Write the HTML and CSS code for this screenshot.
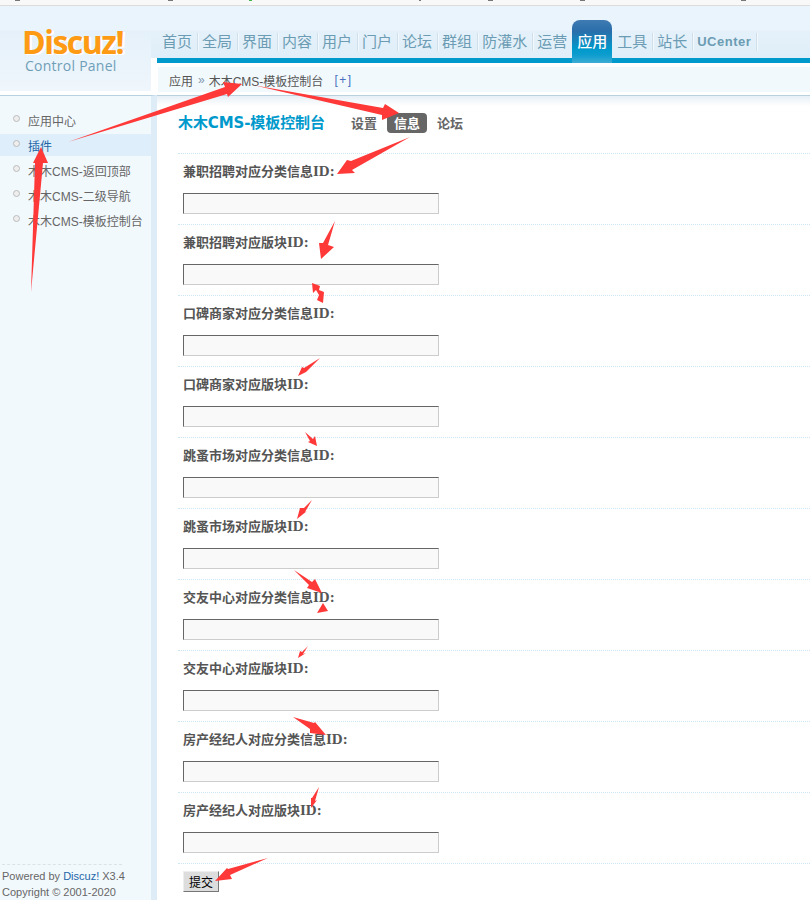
FILE: index.html
```html
<!DOCTYPE html>
<html lang="zh-CN">
<head>
<meta charset="utf-8">
<title>Discuz! Control Panel</title>
<link rel="stylesheet" href="styles.css">
</head>
<body>
<div class="page">
  <div class="topstrip"></div>
  <div class="shell">
    <aside class="leftcol">
      <div class="logo">
        <div class="logo-mark">Discuz!</div>
        <div class="logo-sub">Control Panel</div>
      </div>
      <div class="sidebar">
        <ul class="menu">
          <li class="menu-item"><i class="dot"></i>应用中心</li>
          <li class="menu-item active"><i class="dot"></i>插件</li>
          <li class="menu-item"><i class="dot"></i>木木CMS-返回顶部</li>
          <li class="menu-item"><i class="dot"></i>木木CMS-二级导航</li>
          <li class="menu-item"><i class="dot"></i>木木CMS-模板控制台</li>
        </ul>
        <div class="foot">
          <div>Powered by <span class="foot-link">Discuz!</span> X3.4</div>
          <div>Copyright © 2001-2020</div>
        </div>
      </div>
    </aside>
    <main class="rightcol">
      <nav class="nav">
        <span class="nav-item">首页</span>
        <span class="nav-item">全局</span>
        <span class="nav-item">界面</span>
        <span class="nav-item">内容</span>
        <span class="nav-item">用户</span>
        <span class="nav-item">门户</span>
        <span class="nav-item">论坛</span>
        <span class="nav-item">群组</span>
        <span class="nav-item">防灌水</span>
        <span class="nav-item">运营</span>
        <span class="nav-tab">应用</span>
        <span class="nav-item">工具</span>
        <span class="nav-item">站长</span>
        <span class="nav-item nav-latin">UCenter</span>
      </nav>
      <div class="bluebar"></div>
      <div class="crumbwrap">
        <div class="crumb">
          <span>应用</span><span class="crumb-sep">»</span><span>木木CMS-模板控制台</span><span class="crumb-plus">[+]</span>
        </div>
      </div>
      <div class="content">
        <div class="titlerow">
          <h1 class="title">木木CMS-模板控制台</h1>
          <span class="tab">设置</span>
          <span class="tab tab-on">信息</span>
          <span class="tab">论坛</span>
        </div>
        <form class="form">
          <div class="row"><label class="label">兼职招聘对应分类信息<b class="id">ID:</b></label><input class="field" type="text"></div>
          <div class="row"><label class="label">兼职招聘对应版块<b class="id">ID:</b></label><input class="field" type="text"></div>
          <div class="row"><label class="label">口碑商家对应分类信息<b class="id">ID:</b></label><input class="field" type="text"></div>
          <div class="row"><label class="label">口碑商家对应版块<b class="id">ID:</b></label><input class="field" type="text"></div>
          <div class="row"><label class="label">跳蚤市场对应分类信息<b class="id">ID:</b></label><input class="field" type="text"></div>
          <div class="row"><label class="label">跳蚤市场对应版块<b class="id">ID:</b></label><input class="field" type="text"></div>
          <div class="row"><label class="label">交友中心对应分类信息<b class="id">ID:</b></label><input class="field" type="text"></div>
          <div class="row"><label class="label">交友中心对应版块<b class="id">ID:</b></label><input class="field" type="text"></div>
          <div class="row"><label class="label">房产经纪人对应分类信息<b class="id">ID:</b></label><input class="field" type="text"></div>
          <div class="row"><label class="label">房产经纪人对应版块<b class="id">ID:</b></label><input class="field" type="text"></div>
          <div class="row row-submit"><button class="submit" type="button">提交</button></div>
        </form>
      </div>
    </main>
  </div>
  <svg class="marks" width="810" height="900" viewBox="0 0 810 900" aria-hidden="true">
    <g class="specks">
      <rect x="15" y="0" width="5" height="1"/><rect x="168" y="0" width="5" height="1"/>
      <rect x="419" y="0" width="2" height="1"/><rect x="488" y="0" width="5" height="1"/>
      <rect x="580" y="0" width="5" height="1"/><rect x="741" y="0" width="5" height="1"/>
      <rect class="speck-green" x="249" y="0" width="3" height="1"/>
    </g>
    <g class="arrows">
      <polygon points="68,142 225,87 223,82 242,84 228,97 227,94"/>
      <polygon points="253,85 383,108 385,104 399,113 382,120 382,115"/>
      <polygon points="410,137 351,161 347,160 337,174 355,173 352,170"/>
      <polygon points="31,292 35,163 33,163 41,147 48,163 43,163"/>
      <polygon points="335,221 323,243 319,243 321,259 334,247 328,245"/>
      <polygon points="312,283 320,286 319,290 324,292 323,303 317,300 319,295 316,290 313,293"/>
      <polygon points="320,358 304,368 302,367 298,376 310,370 306,372"/>
      <polygon points="305,432 313,439 315,436 317,446 308,442 310,441"/>
      <polygon points="312,500 304,508 300,508 297,519 307,511 305,512"/>
      <polygon points="294,570 312,582 315,579 322,593 307,588 309,585"/>
      <polygon points="323,603 328,611 317,613"/>
      <polygon points="308,646 302,652 300,651 298,658 306,653 303,654"/>
      <polygon points="293,717 314,723 315,722 326,735 310,733 310,729"/>
      <polygon points="319,787 312,798 311,798 311,808 317,800 315,801"/>
      <polygon points="268,858 228,869 227,868 215,881 232,879 230,875"/>
    </g>
  </svg>
</div>
</body>
</html>
```
FILE: styles.css
```css
* { box-sizing: border-box; }
html, body { margin: 0; padding: 0; background: #fff; }
body { font: 12px "Liberation Sans", "Noto Sans CJK SC", sans-serif; color: #666; }

.page { position: relative; width: 810px; height: 900px; overflow: hidden; }
.topstrip { height: 6px; background: #f8f8f8; border-bottom: 1px solid #dcdcdc; }
.shell { display: flex; height: 894px; }

/* Left column */
.leftcol { width: 157px; flex: none; display: flex; flex-direction: column; }
.logo {
  flex: none; width: 151px; height: 85px; padding: 21px 0 0 22px;
  background: linear-gradient(#eaf4fc 0, #eaf4fc 24px, #e5f1fa 25px, #eff6fc 100%);
}
.logo-mark {
  font: 700 32px/30px "Open Sans", sans-serif; letter-spacing: -1.5px;
  color: #ff9a14; text-shadow: 1px 1px 0 #fff, 2px 1px 0 #fff;
}
.logo-sub { font: 14px/18px "Open Sans", sans-serif; letter-spacing: .25px; color: #6f9fb8; margin: 0 0 0 3px; }

.sidebar {
  flex: 1; min-height: 0; display: flex; flex-direction: column;
  margin-top: 4px; padding-top: 1px; width: 157px;
  background: #f2f9fd; border-top: 1px solid #b9d0df; border-right: 6px solid #deecf8;
}
.menu { list-style: none; margin: 0; padding: 12px 0 0; }
.menu-item {
  display: flex; align-items: center; gap: 8px; height: 22px; margin-bottom: 3px;
  padding: 4px 0 0 13px; line-height: 18px; white-space: nowrap;
}
.menu-item.active { background: #deeefa; color: #2366a8; }
.dot {
  width: 7px; height: 7px; flex: none; border-radius: 50%;
  background: #eee; border: 1px solid #bbb; margin-top: -7px;
}
.foot {
  margin: auto 29px 0 2px; padding-top: 3px; border-top: 1px dashed #dbe3e8;
  font: 11px/16px "Liberation Sans", sans-serif; white-space: nowrap;
}
.foot-link { color: #2366a8; }

/* Right column */
.rightcol { flex: 1; min-width: 0; display: flex; flex-direction: column; }
.nav {
  position: relative; flex: none; display: flex; height: 52px; margin-left: -6px; padding: 27px 0 0 7px;
  background: linear-gradient(#eaf4fc 0, #eaf4fc 24px, #e5f1fa 25px, #dfeef9 100%);
  font: 15px/16px "Noto Sans CJK SC", sans-serif; color: #6b9cb3;
}
.nav-item {
  height: 18px; padding: 0 5px 0 4px; border-right: 1px solid #cfe0ec;
  box-shadow: 1px 0 0 #f2f8fc; white-space: nowrap;
}
.nav-latin { font: 700 13px/17px "Liberation Sans", sans-serif; letter-spacing: .5px; }
.nav-tab {
  position: relative; z-index: 1; flex: none; width: 40px; height: 43px;
  margin: -13px 1px 0 -1px; padding-top: 13px; text-align: center;
  border-radius: 8px 8px 0 0; color: #fff; font-weight: 500;
  background: linear-gradient(#3f7bb2 0, #2a6eaa 11px, #0099cc 29px, #0d9dcf 35px, #3dadd4 100%);
}
.bluebar { flex: none; height: 5px; background: #0099cc; }
.crumbwrap { flex: none; padding: 4px 0 3px 1px; height: 33px; border-bottom: 1px solid #b9d0df; }
.crumb {
  display: flex; align-items: center; height: 25px; padding: 1px 0 0 11px; background: #f2f9fd;
  color: #555; white-space: nowrap;
}
.crumb-sep { margin: 0 4px 0 5px; color: #7f97ad; }
.crumb-plus { margin-left: 11px; color: #4a6fc0; letter-spacing: 1.5px; }

.content {
  flex: none; padding: 17px 0 0 21px;
  background: linear-gradient(#e6f0f6 0, #fff 10px);
}
.titlerow { display: flex; align-items: center; gap: 10px; height: 20px; margin-bottom: 20px; }
.title {
  margin: 0 16px 0 0; font: 700 15px/20px "DejaVu Sans", "Noto Sans CJK SC", sans-serif;
  letter-spacing: -.1px; color: #0099cc; white-space: nowrap;
}
.tab { height: 20px; font: 700 13px/20px "Noto Sans CJK SC", sans-serif; color: #666; }
.tab-on { padding: 0 7px; background: #666; color: #fff; border-radius: 4px; }
.form { display: block; }
.row {
  display: flex; flex-direction: column; align-items: flex-start; height: 71px;
  padding: 6px 0 0 5px; border-top: 1px dotted #cde6f5;
}
.label {
  height: 22px; margin-bottom: 11px;
  font: 700 13px/22px "Noto Sans CJK SC", sans-serif; color: #555; white-space: nowrap;
}
.id { font: 700 15px/22px "Liberation Serif", serif; }
.field {
  display: block; width: 256px; height: 21px; padding: 0; margin: 0; outline: 0;
  background: #f9f9f9; border: 1px solid; border-color: #666 #ccc #ccc #666; border-radius: 0;
}
.row-submit { padding-top: 7px; }
.submit {
  width: 36px; height: 21px; padding: 0; margin: 0; background: #ddd; color: #000;
  border: 1px solid; border-color: #eee #777 #777 #eee; border-radius: 0;
  font: 12px/19px "Noto Sans CJK SC", sans-serif;
}

/* Annotation layer drawn over the screenshot */
.marks { position: absolute; left: 0; top: 0; pointer-events: none; }
.arrows polygon { fill: #ff3838; }
.specks rect { fill: #777; }
.specks .speck-green { fill: #3fb54a; }
```
